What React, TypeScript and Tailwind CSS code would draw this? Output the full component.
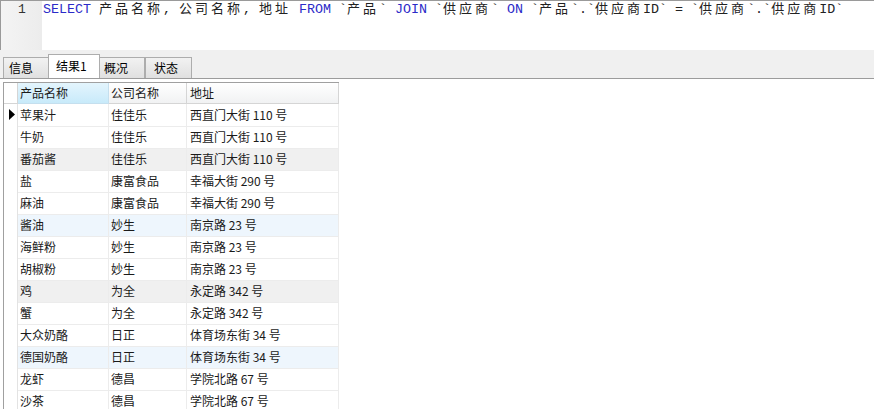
import React from "react";

const rows: [string, string, string, string][] = [
  ["苹果汁", "佳佳乐", "西直门大街 110 号", "white"],
  ["牛奶", "佳佳乐", "西直门大街 110 号", "white"],
  ["番茄酱", "佳佳乐", "西直门大街 110 号", "grey"],
  ["盐", "康富食品", "幸福大街 290 号", "white"],
  ["麻油", "康富食品", "幸福大街 290 号", "white"],
  ["酱油", "妙生", "南京路 23 号", "blue"],
  ["海鲜粉", "妙生", "南京路 23 号", "white"],
  ["胡椒粉", "妙生", "南京路 23 号", "white"],
  ["鸡", "为全", "永定路 342 号", "grey"],
  ["蟹", "为全", "永定路 342 号", "white"],
  ["大众奶酪", "日正", "体育场东街 34 号", "white"],
  ["德国奶酪", "日正", "体育场东街 34 号", "blue"],
  ["龙虾", "德昌", "学院北路 67 号", "white"],
  ["沙茶", "德昌", "学院北路 67 号", "white"],
];

function C({ t }: { t: string }) {
  return <span className="text-[13px] tracking-[3px]">{t}</span>;
}
function K({ t }: { t: string }) {
  return <span className="text-[#2b2bc8]">{t}</span>;
}

export default function App() {
  const cjk = "font-['Noto_Sans_CJK_SC',sans-serif]";
  return (
    <div className={`w-[874px] h-[409px] overflow-hidden bg-white flex flex-col ${cjk}`}>
      {/* editor */}
      <div className="h-[50px] shrink-0 flex border-t border-[#9a9a9a] border-l">
        <div className="w-[41px] bg-gradient-to-r from-[#f4f4f4] to-[#ececec] text-[13px] leading-[16px] pt-[1px] pl-[17px] text-[#333] font-['Liberation_Mono','Noto_Sans_CJK_SC',monospace]">
          1
        </div>
        <div className="flex-1 pl-[1px] pt-[1px] text-[13.33px] leading-[16px] whitespace-nowrap text-[#222] font-['Liberation_Mono','Noto_Sans_CJK_SC',monospace]">
          <K t="SELECT" /> <C t="产品名称" />, <C t="公司名称" />, <C t="地址" /> <K t="FROM" /> `<C t="产品" />` <K t="JOIN" /> `<C t="供应商" />` <K t="ON" /> `<C t="产品" />`.`<C t="供应商" />ID` = `<C t="供应商" />`.`<C t="供应商" />ID`
        </div>
      </div>
      {/* tabs */}
      <div className="h-[29px] shrink-0 bg-[#f0f0f0] flex items-end pl-[3px] border-b border-[#9c9c9c] text-[12px] text-black">
        <div className="w-[46px] h-[21px] border border-b-0 border-[#adadad] bg-gradient-to-b from-[#f2f2f2] to-[#e0e0e0] pl-[5px] leading-[19px]">信息</div>
        <div className="w-[52px] h-[24px] border border-b-0 border-[#adadad] bg-white pl-[7px] leading-[21px] -ml-px relative">结果1</div>
        <div className="w-[46px] h-[21px] border border-b-0 border-[#adadad] bg-gradient-to-b from-[#f2f2f2] to-[#e0e0e0] pl-[4px] leading-[19px] -ml-px">概况</div>
        <div className="w-[47px] h-[21px] border border-b-0 border-[#adadad] bg-gradient-to-b from-[#f2f2f2] to-[#e0e0e0] pl-[8px] leading-[19px]">状态</div>
      </div>
      {/* grid */}
      <div className="pt-[3px] pl-[3px] flex-1">
        <div className="w-[336px] border-l border-t border-[#a0a0a0] text-[12px] text-[#1a1a1a]">
          <div className="grid grid-cols-[14px_91px_78px_152px] h-[21px] leading-[20px]">
            <div className="border-r border-b border-[#d5d5d5] bg-white" />
            <div className="border-r border-b border-[#c5dfee] bg-gradient-to-b from-[#e4f5fd] to-[#c8eafa] pl-[2px]">产品名称</div>
            <div className="border-r border-b border-[#d5d5d5] bg-gradient-to-b from-white to-[#f1f2f3] pl-[2px]">公司名称</div>
            <div className="border-r border-b border-[#d5d5d5] bg-gradient-to-b from-white to-[#f1f2f3] pl-[3px]">地址</div>
          </div>
          {rows.map((r, i) => {
            const bg = r[3] === "grey" ? "bg-[#f0f0f0]" : r[3] === "blue" ? "bg-[#eef6fd]" : "bg-white";
            return (
              <div key={i} className={`grid grid-cols-[14px_91px_78px_152px] h-[22px] leading-[22px] ${bg}`}>
                <div className="border-r border-b border-[#e3e3e3] bg-white relative">
                  {i === 0 && (
                    <svg className="absolute left-[5px] top-[5px]" width="6" height="11" viewBox="0 0 6 11">
                      <path d="M0 0 L6 5.5 L0 11 Z" fill="#000" />
                    </svg>
                  )}
                </div>
                <div className="border-r border-b border-[#ececec] pl-[2px]">{r[0]}</div>
                <div className="border-r border-b border-[#ececec] pl-[2px]">{r[1]}</div>
                <div className="border-r border-b border-[#ececec] pl-[3px]">{r[2]}</div>
              </div>
            );
          })}
        </div>
      </div>
    </div>
  );
}
